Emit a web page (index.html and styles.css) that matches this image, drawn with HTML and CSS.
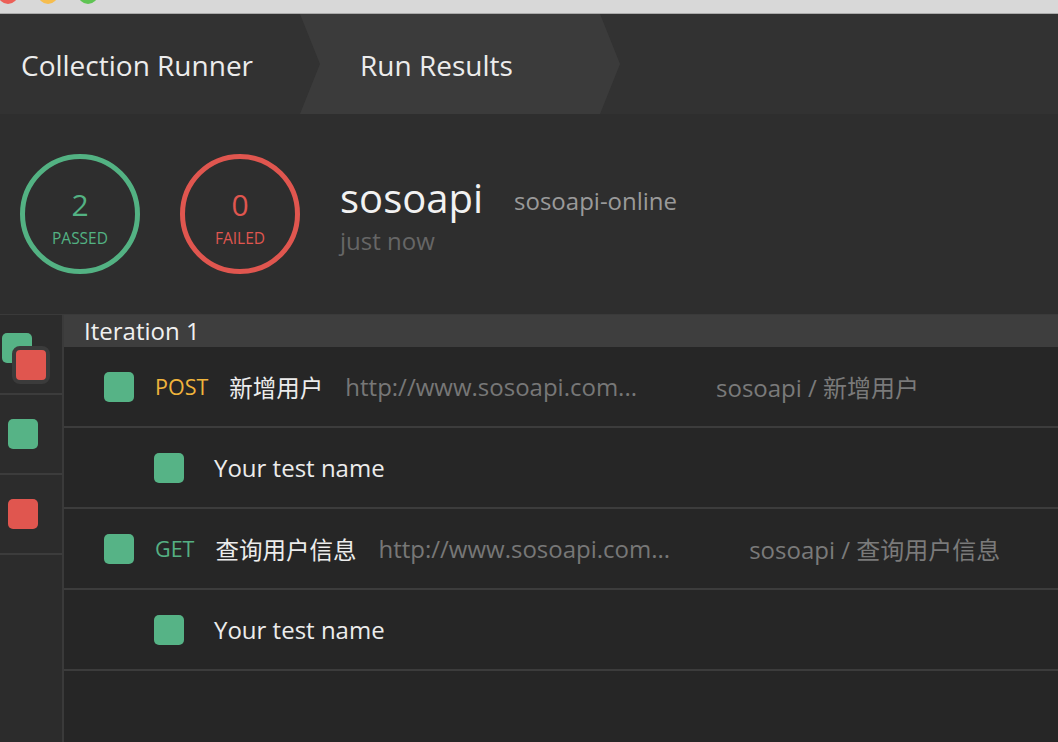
FILE: index.html
```html
<!DOCTYPE html>
<html lang="zh">
<head>
<meta charset="utf-8">
<title>Collection Runner</title>
<link rel="stylesheet" href="styles.css">
</head>
<body>
<div class="chrome">
  <span class="light red"></span>
  <span class="light yellow"></span>
  <span class="light green"></span>
</div>
<header class="crumbs">
  <div class="crumb first">Collection Runner</div>
  <div class="crumb active">Run Results</div>
</header>
<section class="summary">
  <div class="ring pass"><span class="num">2</span><span class="lbl">PASSED</span></div>
  <div class="ring fail"><span class="num">0</span><span class="lbl">FAILED</span></div>
  <div class="meta">
    <div class="titleline"><span class="coll">sosoapi</span><span class="env">sosoapi-online</span></div>
    <div class="when">just now</div>
  </div>
</section>
<section class="content">
  <aside class="side">
    <div class="side-item"><span class="stack"><span class="sq g back"></span><span class="sq r front"></span></span></div>
    <div class="side-item"><span class="sq g"></span></div>
    <div class="side-item"><span class="sq r"></span></div>
  </aside>
  <main class="list">
    <div class="iter">Iteration 1</div>
    <div class="row req">
      <span class="sq g"></span>
      <span class="method post">POST</span>
      <span class="name">新增用户</span>
      <span class="url">http://www.sosoapi.com...</span>
      <span class="path">sosoapi / 新增用户</span>
    </div>
    <div class="row test">
      <span class="sq g"></span>
      <span class="tname">Your test name</span>
    </div>
    <div class="row req">
      <span class="sq g"></span>
      <span class="method get">GET</span>
      <span class="name">查询用户信息</span>
      <span class="url">http://www.sosoapi.com...</span>
      <span class="path">sosoapi / 查询用户信息</span>
    </div>
    <div class="row test">
      <span class="sq g"></span>
      <span class="tname">Your test name</span>
    </div>
  </main>
</section>
</body>
</html>
```
FILE: styles.css
```css
* { box-sizing: border-box; }
html, body { margin: 0; padding: 0; }
body {
  width: 1058px;
  height: 742px;
  overflow: hidden;
  background: #262626;
  font-family: "Open Sans", "Noto Sans CJK SC", sans-serif;
  color: #e8e8e8;
  display: flex;
  flex-direction: column;
}
.chrome {
  height: 14px;
  flex: none;
  background: #d8d8d8;
  border-bottom: 1px solid #ababab;
  display: flex;
  align-items: flex-end;
  gap: 20px;
  padding-left: 0;
  padding-bottom: 9px;
  overflow: hidden;
}
.light { width: 20px; height: 20px; border-radius: 50%; flex: none; }
.light.red { background: #ec5f57; margin-left: -2px; }
.light.yellow { background: #f6bd4e; }
.light.green { background: #5fc453; }

.crumbs {
  height: 100px;
  flex: none;
  background: #323232;
  display: flex;
}
.crumb {
  display: flex;
  align-items: center;
  font-size: 28px;
  color: #ececec;
  height: 100%;
  padding-top: 2px;
}
.crumb.first { width: 300px; padding-left: 21px; }
.crumb.active {
  width: 320px;
  padding-left: 60px;
  background: #3b3b3b;
  clip-path: polygon(0 0, 300px 0, 320px 50px, 300px 100px, 0 100px, 20px 50px);
}

.summary {
  height: 200px;
  flex: none;
  background: #2e2e2e;
  display: flex;
  align-items: flex-start;
  padding: 40px 0 0 20px;
  gap: 40px;
}
.ring {
  width: 120px;
  height: 120px;
  border-radius: 50%;
  border: 5px solid;
  display: flex;
  flex-direction: column;
  align-items: center;
  justify-content: center;
  gap: 5px;
  padding-top: 7px;
}
.ring.pass { border-color: #53b283; color: #53b283; }
.ring.fail { border-color: #e0564f; color: #e0564f; }
.num { font-size: 30px; line-height: 36px; }
.lbl { font-size: 15.5px; line-height: 20px; }
.meta { padding-top: 20px; }
.titleline { display: flex; align-items: baseline; gap: 31px; }
.coll { font-size: 40px; line-height: 48px; color: #f2f2f2; }
.env { font-size: 24px; color: #9a9a9a; position: relative; top: -3px; }
.when { font-size: 24px; color: #666; line-height: 30px; margin-top: 4px; }

.content {
  flex: 1;
  display: flex;
  border-top: 1px solid #3a3a3a;
  min-height: 0;
}
.side {
  width: 64px;
  flex: none;
  background: #2c2c2c;
  border-right: 2px solid #3a3a3a;
}
.side-item {
  height: 80px;
  border-bottom: 2px solid #3c3c3c;
  display: flex;
  align-items: center;
  padding-left: 8px;
}
.side-item:first-child { padding-left: 2px; align-items: flex-start; padding-top: 18px; }
.stack { display: flex; flex-direction: column; }
.sq {
  width: 30px;
  height: 30px;
  border-radius: 5px;
  flex: none;
  display: block;
}
.sq.g { background: #56b386; }
.sq.r { background: #e0564f; }
.stack .front {
  width: 38px;
  height: 38px;
  border: 4px solid #3b3b3b;
  border-radius: 8px;
  margin: -17px 0 0 10px;
}
.list { flex: 1; display: flex; flex-direction: column; }
.iter {
  height: 32px;
  background: #3e3e3e;
  font-size: 24px;
  line-height: 32px;
  padding-left: 20px;
  color: #f0f0f0;
  flex: none;
}
.row {
  height: 81px;
  border-bottom: 2px solid #3c3c3c;
  display: flex;
  align-items: center;
  flex: none;
  white-space: nowrap;
}
.row.req { padding-left: 40px; }
.row.test { padding-left: 90px; }
.method { font-size: 21.5px; margin-left: 21px; }
.method.post { color: #f0b43c; }
.method.get { color: #55b083; }
.name { font-size: 23.5px; color: #ececec; margin-left: 21px; }
.url { font-size: 24px; color: #777; margin-left: 22px; }
.path { font-size: 24px; color: #7a7a7a; margin-left: 79px; }
.tname { font-size: 24px; color: #ececec; margin-left: 30px; }
```
